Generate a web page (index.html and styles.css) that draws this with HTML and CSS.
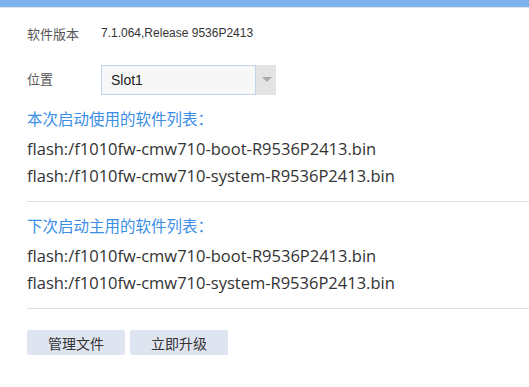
FILE: index.html
```html
<!DOCTYPE html>
<html lang="zh-cn">
<head>
  <meta charset="UTF-8">
  <meta name="viewport" content="width=device-width, initial-scale=1.0">
  <title>软件升级</title>
  <link rel="stylesheet" href="styles.css">
</head>
<body>
  <div class="topbar"></div>
  <div class="container">
    <div class="row row-version">
      <span class="label">软件版本</span>
      <span class="value">7.1.064,Release 9536P2413</span>
    </div>
    <div class="row row-slot">
      <span class="label">位置</span>
      <div class="select">
        <span class="select-text">Slot1</span>
        <span class="select-arrow"></span>
      </div>
    </div>

    <div class="section">
      <h3 class="title">本次启动使用的软件列表：</h3>
      <div class="file">flash:/f1010fw-cmw710-boot-R9536P2413.bin</div>
      <div class="file">flash:/f1010fw-cmw710-system-R9536P2413.bin</div>
    </div>

    <div class="section">
      <h3 class="title">下次启动主用的软件列表：</h3>
      <div class="file">flash:/f1010fw-cmw710-boot-R9536P2413.bin</div>
      <div class="file">flash:/f1010fw-cmw710-system-R9536P2413.bin</div>
    </div>

    <div class="buttons">
      <button class="btn">管理文件</button>
      <button class="btn">立即升级</button>
    </div>
  </div>
</body>
</html>
```

FILE: styles.css
```css
body {
  margin: 0;
  font-family: "Open Sans", "Noto Sans CJK SC", sans-serif;
  background-color: #ffffff;
  color: #333;
}
.topbar {
  height: 7px;
  background-color: #7cb3ea;
  border-bottom: 1px solid #dde3ea;
}
.container {
  padding-left: 27px;
}
.row {
  display: flex;
  align-items: center;
}
.row-version {
  height: 20px;
  margin-top: 15px;
}
.row-slot {
  margin-top: 22px;
}
.label {
  width: 74px;
  font-family: "Noto Sans CJK SC", sans-serif;
  font-size: 13px;
  color: #555;
}
.row-slot .label {
  align-self: flex-start;
  margin-top: 4px;
}
.value {
  font-family: "Liberation Sans", Arial, sans-serif;
  font-size: 12px;
  color: #333;
}
.select {
  display: flex;
  width: 175px;
  height: 30px;
}
.select-text {
  flex: 1;
  box-sizing: border-box;
  border: 1px solid #c6d4e8;
  background-color: #f7f7f7;
  padding-left: 9px;
  line-height: 28px;
  font-family: "Liberation Sans", Arial, sans-serif;
  font-size: 14px;
  color: #222;
}
.select-arrow {
  width: 20px;
  background-color: #e4e4e4;
  position: relative;
}
.select-arrow::after {
  content: "";
  position: absolute;
  left: 6px;
  top: 12px;
  border-left: 5px solid transparent;
  border-right: 5px solid transparent;
  border-top: 5px solid #aaa;
}
.section {
  border-bottom: 1px solid #dedede;
  padding-bottom: 12px;
}
.title {
  margin: 0;
  font-family: "Noto Sans CJK SC", sans-serif;
  font-weight: normal;
  font-size: 15.5px;
  line-height: 26px;
  color: #3a8ee6;
  padding-top: 10px;
  padding-bottom: 4px;
}
.section:first-of-type .title {
  padding-top: 5px;
}
.file {
  font-size: 16.5px;
  line-height: 27px;
  color: #333;
}
.buttons {
  display: flex;
  gap: 5px;
  margin-top: 21px;
}
.btn {
  width: 98px;
  height: 25px;
  border: none;
  border-radius: 2px;
  background-color: #dfe5f0;
  font-family: "Noto Sans CJK SC", sans-serif;
  font-size: 14px;
  color: #333;
  cursor: pointer;
  padding: 0;
}
```
